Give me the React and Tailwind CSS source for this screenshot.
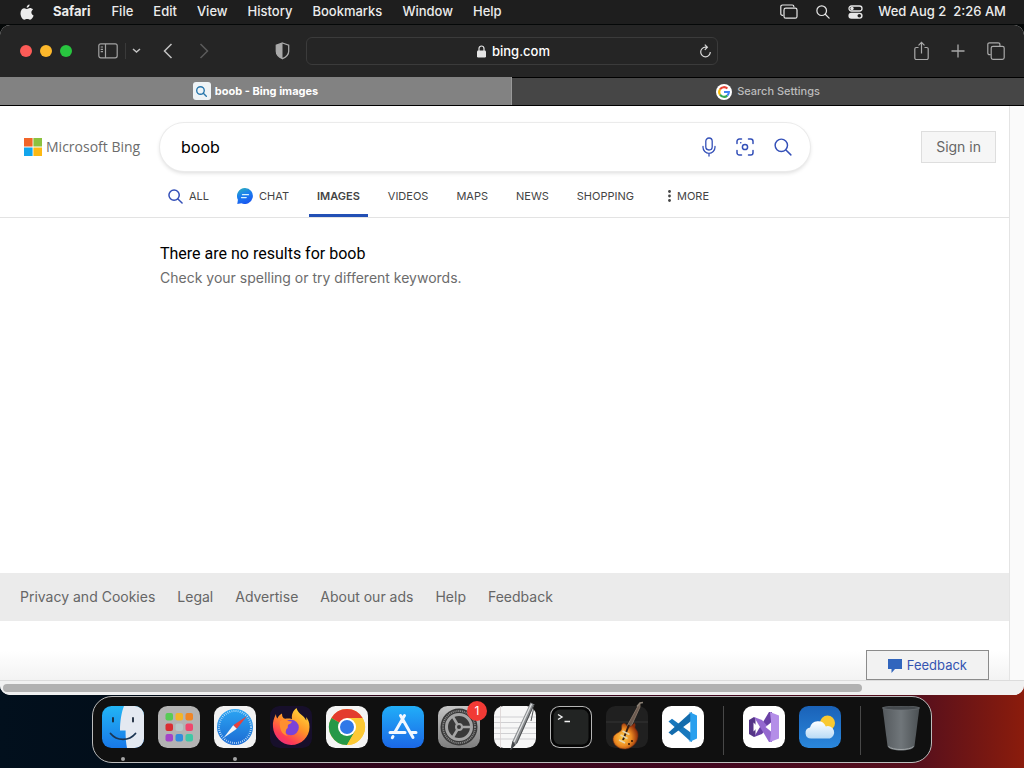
import React, { useState } from 'react'

const menus = ["File", "Edit", "View", "History", "Bookmarks", "Window", "Help"];
const footerLinks = ["Privacy and Cookies", "Legal", "Advertise", "About our ads", "Help", "Feedback"];

const AppleIcon = () => (
    <svg width="14" height="17" viewBox="0 0 14 17" fill="#ececec">
        <path d="M9.6 0.5c.1 1.7-1.3 3.2-2.9 3.2C6.500 2.100 8 .7 9.600.5z" />
        <path d="M7 5c.7 0 1.600-.9 3-.9 1 0 2.200.5 3 1.500-2.400 1.500-2 4.900.6 5.900-.6 1.700-2 4.300-3.500 4.300-1.100 0-1.500-.7-2.900-.7s-1.800.7-2.800.7C2.500 15.800.5 12.400.5 9.300.5 6 2.500 4.200 4.300 4.200 5.500 4.200 6.400 5 7 5z" />
    </svg>
)

const DisplaysIcon = () => (
    <svg width="18" height="16" viewBox="0 0 18 16" fill="none" stroke="#e6e6e6" strokeWidth="1.2">
        <path d="M3.200 11.400H2.500A1.700 1.700 0 0 1 .8 9.700V2.700A1.700 1.700 0 0 1 2.500 1h9.700a1.700 1.700 0 0 1 1.700 1.700v.6" />
        <rect x="4" y="4.200" width="13" height="10" rx="1.800" />
    </svg>
)

const SearchIcon = ({ size = 14, color = "#e6e6e6", width = 1.4 }) => (
    <svg width={size} height={size} viewBox="0 0 16 16" fill="none" stroke={color} strokeWidth={width} strokeLinecap="round">
        <circle cx="6.500" cy="6.500" r="5.500" />
        <path d="M10.600 10.600 15 15" />
    </svg>
)

const ControlIcon = () => (
    <svg width="15" height="14" viewBox="0 0 15 14" fill="none">
        <rect x="1" y="1" width="13" height="5" rx="2.500" stroke="#e6e6e6" strokeWidth="1.300" />
        <circle cx="4" cy="3.500" r="1.700" fill="#e6e6e6" />
        <rect x=".4" y="7.800" width="14.200" height="6" rx="3" fill="#e6e6e6" />
        <circle cx="11.300" cy="10.800" r="1.800" fill="#1e1e1e" />
    </svg>
)

const SidebarIcon = () => (
    <svg width="20" height="16" viewBox="0 0 20 16" fill="none" stroke="#a3a3a3" strokeWidth="1.200">
        <rect x=".8" y=".8" width="18.400" height="14" rx="2" />
        <path d="M7.500 1v14M2.700 4H5M2.700 6.300H5M2.700 8.600H5" />
    </svg>
)

const ShieldIcon = () => (
    <svg width="15" height="18" viewBox="0 0 15 18">
        <path d="M7.500 1 13.700 3.200v6c0 3.500-2.500 5.800-6.200 7.500C3.800 15 1.300 12.700 1.300 9.200v-6z" fill="none" stroke="#a9a9a9" strokeWidth="1.300" />
        <path d="M7.500 1v15.700C3.800 15 1.300 12.700 1.300 9.200v-6z" fill="#a9a9a9" />
    </svg>
)

const GoogleIcon = () => (
    <svg width="16" height="16" viewBox="0 0 16 16">
        <circle cx="8" cy="8" r="8" fill="#fff" />
        <g fill="none" strokeWidth="2.100">
            <path d="M4 5.300A4.900 4.900 0 0 1 11.400 4.500" stroke="#ea4335" />
            <path d="M4 5.300A4.900 4.900 0 0 0 4 10.700" stroke="#fbbc05" />
            <path d="M4 10.700a4.900 4.900 0 0 0 7.300.9" stroke="#34a853" />
            <path d="M8 8h4.900a4.900 4.900 0 0 1-1.600 3.600" stroke="#4285f4" />
        </g>
    </svg>
)

const ChatIcon = () => (
    <svg width="16" height="16" viewBox="0 0 16 16">
        <defs>
            <linearGradient id="chat" x1="0" y1="0" x2=".4" y2="1">
                <stop offset="0" stopColor="#2fb4b4" />
                <stop offset=".5" stopColor="#1b80ee" />
                <stop offset="1" stopColor="#1a5bf0" />
            </linearGradient>
        </defs>
        <path d="M8 0a8 8 0 1 1-3.600 15.200L.3 16l.6-4.200A8 8 0 0 1 8 0z" fill="url(#chat)" />
        <path d="M5.500 6.700h6M4.500 9.600h4.700" stroke="#d8f3ff" strokeWidth="1.300" strokeLinecap="round" />
    </svg>
)

const Tile = ({ children, fill = "#fff" }) => (
    <svg className="overflow-visible" width="42" height="42" viewBox="0 0 42 42" fill="none">
        <rect width="42" height="42" rx="9.500" fill={fill} />
        {children}
    </svg>
)

const Finder = () => (
    <Tile fill="url(#finder)">
        <defs>
            <linearGradient id="finder" x1="0" y1="0" x2="0" y2="1">
                <stop offset="0" stopColor="#22b5f5" />
                <stop offset="1" stopColor="#1878e8" />
            </linearGradient>
        </defs>
        <path d="M22 0h10.500A9.500 9.500 0 0 1 42 9.500v23a9.500 9.500 0 0 1-9.500 9.500H25c-1-5-1.500-10-1.400-17.500H18C18 15 19.500 6 22 0z" fill="#e4e9f1" />
        <path d="M11 12v3.500M31 12v3.500" stroke="#182638" strokeWidth="1.800" strokeLinecap="round" />
        <path d="M8.500 27.500c6.500 7.800 18.500 7.800 25 0" stroke="#1b3552" strokeWidth="1.800" strokeLinecap="round" />
    </Tile>
)

const Launchpad = () => {
    const colors = ["#57cb55", "#f3b52a", "#ef8526", "#d92d32", "#b8c7c8", "#ef466d", "#a344c8", "#318ddd", "#3fc7a5"];
    return (
        <Tile fill="#b3b3b3">
            {colors.map((c, i) => (
                <rect key={c} x={7.5 + (i % 3) * 10} y={7 + Math.floor(i / 3) * 10.5} width="7.500" height="7.500" rx="2" fill={c} />
            ))}
        </Tile>
    )
}

const SafariApp = () => (
    <Tile fill="#f2f2f2">
        <defs>
            <linearGradient id="safari" x1="0" y1="0" x2="0" y2="1">
                <stop offset="0" stopColor="#2ba5f3" />
                <stop offset="1" stopColor="#1c6bd3" />
            </linearGradient>
        </defs>
        <circle cx="21" cy="21" r="18" fill="url(#safari)" />
        <circle cx="21" cy="21" r="16" stroke="#d5ebfb" strokeWidth="2" strokeDasharray=".7 1.400" />
        <path d="M33 10 19.200 19.200l3.600 3.600z" fill="#e7413c" />
        <path d="M9.500 32 19.200 19.200l3.600 3.600z" fill="#f3f5f7" />
    </Tile>
)

const Firefox = () => (
    <Tile fill="#170f2b">
        <defs>
            <linearGradient id="fox" x1=".85" y1="0" x2=".2" y2="1">
                <stop offset="0" stopColor="#ffe03c" />
                <stop offset=".45" stopColor="#ff9327" />
                <stop offset=".8" stopColor="#ff3b55" />
                <stop offset="1" stopColor="#e62b87" />
            </linearGradient>
        </defs>
        <path d="M26.500 2c-4 3-5 7-4.500 11-4-1-6 0-8-.5-1.500-1-2-3-2-5C9 9 8 11 7.500 12.500 6.500 12 6 10 6 8c-2 4-3.600 8-3 13 .6 9.500 8.500 18 18.200 18C31.500 39 39.500 31 39.500 21c0-5-1.500-8-3.500-10 .3 1.500.5 2.500.2 3.500C34 9 28 8 26.500 2z" fill="url(#fox)" />
        <circle cx="21" cy="21.500" r="7.800" fill="#7b43d8" />
        <path d="M10 15c3-2 6-1.500 8 0l4 .5c-.5 2-3 2.500-4 3.500-.5 1.500.5 3-1.500 4-1 3-1.500 5 1.500 7-7-1-9-9-8-15z" fill="#ff8f30" />
    </Tile>
)

const Chrome = () => (
    <Tile fill="#f4f4f4">
        <circle cx="21" cy="21" r="18" fill="#fcc934" />
        <path d="M21 21 5.400 12A18 18 0 0 1 36.600 12H21z" fill="#e33b2e" />
        <path d="M21 21 5.400 12A18 18 0 0 0 21 39l7.800-13.500z" fill="#269847" />
        <path d="M21 12h15.600A18 18 0 0 1 21 39l7.800-13.500z" fill="#fcc934" />
        <circle cx="21" cy="21" r="9" fill="#fff" />
        <circle cx="21" cy="21" r="7" fill="#3078e8" />
    </Tile>
)

const AppStore = () => (
    <Tile fill="url(#store)">
        <defs>
            <linearGradient id="store" x1="0" y1="0" x2="0" y2="1">
                <stop offset="0" stopColor="#21aef8" />
                <stop offset="1" stopColor="#1b67e6" />
            </linearGradient>
        </defs>
        <g stroke="#f2f8ff" strokeWidth="3" strokeLinecap="round">
            <path d="M22.500 9.500 13 26M18.500 9.500 31 31.500M8 26.500h15M29.500 26.500H34M11 30.500l-.7 1.200" />
        </g>
    </Tile>
)

const Settings = () => (
    <Tile fill="url(#gear)">
        <defs>
            <linearGradient id="gear" x1="0" y1="0" x2="0" y2="1">
                <stop offset="0" stopColor="#c5c5c5" />
                <stop offset="1" stopColor="#7e7e7e" />
            </linearGradient>
        </defs>
        <circle cx="21" cy="21" r="18.500" fill="#393939" />
        <circle cx="21" cy="21" r="16" stroke="#858585" strokeWidth="1.800" strokeDasharray="1.100 .8" />
        <circle cx="21" cy="21" r="12.500" stroke="#a5a5a5" strokeWidth="3" />
        <circle cx="21" cy="21" r="3" stroke="#a5a5a5" strokeWidth="2" />
        <path d="M24 21h9.500M19.500 18.500l-4.800-8M19.500 23.500l-4.800 8" stroke="#a5a5a5" strokeWidth="2.600" />
    </Tile>
)

const TextEdit = () => (
    <Tile fill="#f7f7f7">
        <path d="M0 11h42M0 16.500h42M0 22h42M0 27.500h42M0 33h42" stroke="#c5c5c9" strokeWidth=".8" />
        <path d="M6.500 0v42" stroke="#d9d2d2" strokeWidth=".8" />
        <path d="M36.500-3.500 40.500-1.500 23.500 37 16.500 44l2-9z" fill="#8a8d90" />
        <path d="M37.500-2 20 36" stroke="#e0e1e2" strokeWidth="1.300" />
        <path d="M40-1.500 22.500 37.500M39.500 3 37 15" stroke="#4d4f51" strokeWidth="1" />
        <path d="M18.500 35 16.500 44l5-5z" fill="#45474a" />
    </Tile>
)

const Terminal = () => (
    <Tile fill="#b5b5b5">
        <rect x="1" y="1" width="40" height="40" rx="8.500" fill="#050505" />
        <rect x="3.500" y="3.500" width="35" height="35" rx="6.500" fill="#222423" />
        <path d="m8 8.500 4 2.500-4 2.500M14.500 15.500H20" stroke="#f3f3f3" strokeWidth="1.400" />
    </Tile>
)

const GarageBand = () => (
    <Tile fill="#202020">
        <defs>
            <radialGradient id="guitar" cx=".4" cy=".55" r=".6">
                <stop offset="0" stopColor="#ffd04a" />
                <stop offset=".55" stopColor="#ee8c22" />
                <stop offset="1" stopColor="#8d2c0b" />
            </radialGradient>
        </defs>
        <path d="M0 16h42" stroke="#343434" />
        <path d="M34-2.500 31.500 1 20 22l3.500 2L34 1z" fill="#6b5a50" stroke="#9b8776" strokeWidth=".7" />
        <path d="M31 .5 34-3l3-.5" stroke="#8b8176" strokeWidth="1.500" />
        <path d="M16 18.500c2-2.500 4-.5 5 1.500s4 1 7-2.500c1-1 1.500 1.500 1 3-.6 2.500 2.500 3 3 7.500.8 7.500-5.500 14.500-12.500 15C12 43.500 6.500 38 7 32.500c.6-5 6-5.500 8-8 1.200-2 .1-4.500 1-6z" fill="url(#guitar)" stroke="#6c2b12" strokeWidth=".6" />
        <path d="M23 19 17 34" stroke="#321d13" strokeWidth="2" />
        <path d="m16.500 25 7 3.500M14.500 29l7 3.500M13 34l6 3" stroke="#e7d6b0" strokeWidth="1.500" />
        <circle cx="26" cy="35" r="1" fill="#2c1507" />
        <circle cx="23" cy="38" r="1" fill="#2c1507" />
    </Tile>
)

const VSCode = () => (
    <Tile>
        <path d="M6.500 15.500 10 12.800 30 27.500V36L27 34z" fill="#1878bd" />
        <path d="M6.500 26.500 10 29.200l20-14.700V6L27 8z" fill="#146cad" />
        <path d="M28 6.300 35 9.500v23l-7 3.300-1.500-1.300h1.800v-27h-1.800z" fill="#2aa0ee" />
    </Tile>
)

const VisualStudio = () => (
    <Tile>
        <path d="M6 14 11 11l1.500 1v18L11 31l-5-3z" fill="#553587" />
        <path d="M10.500 16.500v9L15 21z" fill="#fff" />
        <path d="M11 31 19 28 29 17V6h-3z" fill="#6940a5" />
        <path d="M11 11 19 14 29 25v11h-3z" fill="#9468cf" />
        <path d="m27 6 9 3.500v23L27 36l1-9V15z" fill="#b48ee8" />
        <path d="M28 16.500v9L22.500 21z" fill="#fff" />
    </Tile>
)

const Weather = () => (
    <Tile fill="url(#sky)">
        <defs>
            <linearGradient id="sky" x1="0" y1="0" x2="0" y2="1">
                <stop offset="0" stopColor="#1a62b8" />
                <stop offset="1" stopColor="#2a87dc" />
            </linearGradient>
            <linearGradient id="cloud" x1="0" y1="0" x2="0" y2="1">
                <stop offset="0" stopColor="#fff" />
                <stop offset="1" stopColor="#b9dbf6" />
            </linearGradient>
        </defs>
        <circle cx="28.500" cy="17" r="7.500" fill="#f9c931" />
        <path d="M12 32.500a5.500 5.500 0 0 1-1-10.900 8.300 8.300 0 0 1 15.800-1.200 6.200 6.200 0 1 1 4 12.100z" fill="url(#cloud)" />
    </Tile>
)

const Trash = () => (
    <svg width="42" height="48" viewBox="0 0 42 48">
        <defs>
            <linearGradient id="bin" x1="0" y1="0" x2="1" y2="0">
                <stop offset="0" stopColor="#54595d" />
                <stop offset=".5" stopColor="#70767a" />
                <stop offset="1" stopColor="#4b5053" />
            </linearGradient>
        </defs>
        <path d="M2.500 1 7.500 40c1 6 26 6 27 0l5-39z" fill="url(#bin)" />
        <ellipse cx="21" cy="2" rx="18.500" ry="2" fill="#454a4e" stroke="#6f7478" strokeWidth=".6" />
        <path d="M8.500 40.500c4 4 21 4 25 0" stroke="#a3a8aa" fill="none" />
    </svg>
)

const dockApps = [
    { name: "Finder", Icon: Finder, running: true },
    { name: "Launchpad", Icon: Launchpad },
    { name: "Safari", Icon: SafariApp, running: true },
    { name: "Firefox", Icon: Firefox },
    { name: "Chrome", Icon: Chrome },
    { name: "App Store", Icon: AppStore },
    { name: "Settings", Icon: Settings, badge: 1 },
    { name: "TextEdit", Icon: TextEdit },
    { name: "Terminal", Icon: Terminal },
    { name: "GarageBand", Icon: GarageBand },
    { name: "VS Code", Icon: VSCode },
    { name: "divider1" },
    { name: "Visual Studio", Icon: VisualStudio },
    { name: "Weather", Icon: Weather },
    { name: "divider2" },
    { name: "Trash", Icon: Trash },
];

function MenuBar() {
    return (
        <header className="flex h-6 items-center bg-[#1e1e1e] pl-5 pr-[18px] text-[13px] font-medium text-[#ececec]">
            <button aria-label="Apple menu"><AppleIcon /></button>
            <nav className="ml-[19px] flex gap-5">
                <button className="mr-px font-bold">Safari</button>
                {menus.map((m) => <button key={m}>{m}</button>)}
            </nav>
            <div className="ml-auto flex items-center">
                <button aria-label="Displays"><DisplaysIcon /></button>
                <button aria-label="Spotlight" className="ml-[18px]"><SearchIcon /></button>
                <button aria-label="Control Center" className="ml-[18px]"><ControlIcon /></button>
                <span className="ml-[15px] whitespace-pre">Wed Aug 2  2:26 AM</span>
            </div>
        </header>
    )
}

function Toolbar() {
    return (
        <div className="grid h-[52px] grid-cols-[1fr_412px_1fr] items-center bg-[#252525]">
            <div className="flex items-center pl-5 pr-4">
                <div className="flex gap-2">
                    <button aria-label="Close" className="size-3 rounded-full bg-[#fc5b57]" />
                    <button aria-label="Minimize" className="size-3 rounded-full bg-[#fdb82b]" />
                    <button aria-label="Zoom" className="size-3 rounded-full bg-[#28c53f]" />
                </div>
                <button aria-label="Sidebar" className="ml-[26px]"><SidebarIcon /></button>
                <span className="ml-[7px] h-4 w-px bg-[#3a3a3a]" />
                <button aria-label="Tab groups" className="ml-1.5">
                    <svg width="9" height="6" viewBox="0 0 9 6" fill="none" stroke="#c2c2c2" strokeWidth="1.500"><path d="m1 1 3.500 3L8 1" /></svg>
                </button>
                <button aria-label="Back" className="ml-[22px]">
                    <svg width="10" height="16" viewBox="0 0 10 16" fill="none" stroke="#c2c2c2" strokeWidth="1.500"><path d="M8.500 1 1.500 8l7 7" /></svg>
                </button>
                <button aria-label="Forward" className="ml-[26px]">
                    <svg width="10" height="16" viewBox="0 0 10 16" fill="none" stroke="#5b5b5b" strokeWidth="1.500"><path d="m1.500 1 7 7-7 7" /></svg>
                </button>
                <button aria-label="Privacy report" className="ml-auto"><ShieldIcon /></button>
            </div>
            <div className="flex h-7 items-center rounded-md border border-[#3b3b3b] pr-1.5">
                <div className="flex flex-1 items-center justify-center gap-1.5 pl-5 pt-px text-[13px] font-medium text-white">
                    <svg width="9" height="13" viewBox="0 0 9 13">
                        <rect y="5.500" width="9" height="7" rx="1.200" fill="#e5e5e5" />
                        <path d="M2 6V3.500a2.500 2.500 0 0 1 5 0V6" fill="none" stroke="#e5e5e5" strokeWidth="1.200" />
                    </svg>
                    <span>bing.com</span>
                </div>
                <button aria-label="Reload">
                    <svg width="11" height="14" viewBox="0 0 11 14" fill="none" stroke="#dadada" strokeWidth="1.200"><path d="M7 3.200H5.500a4.800 4.800 0 1 0 4.800 4.800M4.800.6l2.600 2.600-2.600 2.600" /></svg>
                </button>
            </div>
            <div className="flex items-center justify-end gap-[22px] pr-[19px] text-[#a9a9a9]">
                <button aria-label="Share">
                    <svg width="15" height="20" viewBox="0 0 15 20" fill="none" stroke="currentColor" strokeWidth="1.200"><path d="M4.500 6.500H2.300A1.500 1.500 0 0 0 .8 8v9a1.500 1.500 0 0 0 1.500 1.500h10.400a1.500 1.500 0 0 0 1.500-1.500V8a1.500 1.500 0 0 0-1.500-1.500h-2.200M7.500 12.500V1.300M4.500 4.300l3-3 3 3" /></svg>
                </button>
                <button aria-label="New tab">
                    <svg width="14" height="14" viewBox="0 0 14 14" stroke="currentColor" strokeWidth="1.300"><path d="M7 .5v13M.5 7h13" /></svg>
                </button>
                <button aria-label="Tab overview">
                    <svg width="18" height="18" viewBox="0 0 18 18" fill="none" stroke="currentColor" strokeWidth="1.200"><path d="M3.700 12.700H2.500a1.700 1.700 0 0 1-1.700-1.700V2.500A1.700 1.700 0 0 1 2.500.8h8.700a1.700 1.700 0 0 1 1.700 1.700v1.400" /><rect x="4.200" y="4.300" width="13" height="13" rx="1.800" /></svg>
                </button>
            </div>
        </div>
    )
}

function BingHeader() {
    const [query, setQuery] = useState("boob");

    return (
        <header className="border-b border-[#e3e3e3] pt-[17px]">
            <div className="flex items-center pl-6 pr-[13px]">
                <a href="#" className="flex w-[136px] shrink-0 items-center gap-1 whitespace-nowrap font-['Open_Sans',sans-serif] text-sm font-medium text-[#6c6c6c]">
                    <svg width="18" height="18" viewBox="0 0 18 18">
                        <path fill="#f16529" d="M0 0h8.600v8.600H0z" />
                        <path fill="#8bc13f" d="M9.400 0H18v8.600H9.400z" />
                        <path fill="#12a5ec" d="M0 9.400h8.600V18H0z" />
                        <path fill="#fdb913" d="M9.400 9.400H18V18H9.400z" />
                    </svg>
                    Microsoft Bing
                </a>
                <form className="flex h-12 max-w-[650px] flex-1 items-center rounded-full bg-white pl-[21px] pr-[18px] shadow-[0_0_0_1px_#ebebeb,0_2px_4px_#00000026]" onSubmit={(e) => e.preventDefault()}>
                    <input aria-label="Search" className="min-w-0 flex-1 text-base text-black outline-none" value={query} onChange={(e) => setQuery(e.target.value)} />
                    <button type="button" aria-label="Search using voice">
                        <svg width="14" height="20" viewBox="0 0 14 20" fill="none" stroke="#3450b8" strokeWidth="1.300" strokeLinecap="round"><rect x="3.800" y="1" width="6.400" height="12" rx="3.200" /><path d="M1 9.500v.8a6 6 0 0 0 12 0v-.8M7 16.300V19" /></svg>
                    </button>
                    <button type="button" aria-label="Search using an image" className="ml-5">
                        <svg width="18" height="18" viewBox="0 0 18 18" fill="none" stroke="#3450b8" strokeWidth="1.500" strokeLinecap="round"><path d="M1 5.500V3.300A2.300 2.300 0 0 1 3.300 1h2.200M12.500 1h2.200A2.300 2.300 0 0 1 17 3.300v2.200M17 12.500v2.200a2.300 2.300 0 0 1-2.300 2.300h-2.200M5.500 17H3.300A2.300 2.300 0 0 1 1 14.700v-2.200" /><circle cx="9" cy="9" r="2.600" /><path d="M4.700 4.700h.1" /></svg>
                    </button>
                    <button aria-label="Search" className="ml-5"><SearchIcon size={18} color="#3450b8" width={1.3} /></button>
                </form>
                <button className="ml-auto h-8 border border-[#dedede] bg-[#f6f6f6] px-3.5 text-sm text-[#666]">Sign in</button>
            </div>
            <nav className="ml-40 flex h-[46px] gap-3 text-[11px] leading-4 text-[#444]">
                <a href="#" className="flex items-center gap-1.5 px-2 pt-1"><SearchIcon size={15} color="#3450b8" width={1.6} />ALL</a>
                <a href="#" className="flex items-center gap-1.5 px-2 pt-1"><ChatIcon />CHAT</a>
                <a href="#" className="flex items-center border-b-3 border-[#2350b5] px-2 pt-1.5 font-semibold">IMAGES</a>
                {["VIDEOS", "MAPS", "NEWS", "SHOPPING"].map((t) => (
                    <a key={t} href="#" className="flex items-center px-2 pt-1">{t}</a>
                ))}
                <button className="ml-1.5 flex items-center gap-1.5 px-2 pt-1">
                    <svg width="3" height="12" viewBox="0 0 3 12" fill="#444"><circle cx="1.500" cy="1.500" r="1.400" /><circle cx="1.500" cy="6" r="1.400" /><circle cx="1.500" cy="10.500" r="1.400" /></svg>
                    MORE
                </button>
            </nav>
        </header>
    )
}

function Dock() {
    return (
        <nav className="mx-auto mt-px mb-[5px] flex h-[67px] gap-[14px] rounded-[20px] border border-[#bdbdbd] bg-[#101010] px-[9px] pt-[9px]">
            {dockApps.map(({ name, Icon, running, badge }) =>
                Icon ? (
                    <button key={name} aria-label={name} className="relative flex w-[42px] flex-col items-center">
                        <Icon />
                        {badge && <span className="absolute -right-[7px] -top-[5px] flex size-5 items-center justify-center rounded-full bg-[#f13a35] text-xs text-white">{badge}</span>}
                        {running && <span className="mt-[9px] size-1 rounded-full bg-[#a5a5a5]" />}
                    </button>
                ) : (
                    <span key={name} className="mx-[5px] h-[49px] w-px bg-[#484848]" />
                )
            )}
        </nav>
    )
}

function App() {
    return (
        <div className="flex min-h-screen flex-col bg-[linear-gradient(90deg,#02101d_0%,#020d19_15%,#30051b_35%,#43071f_70%,#58101c_90%,#8b1c0c_100%)] font-[Inter,'Liberation_Sans',sans-serif]">
            <MenuBar />
            {/* browser window */}
            <div className="bg-[linear-gradient(#050808_50%,transparent_50%)] flex flex-1 flex-col pt-px">
                <div className="flex flex-1 flex-col overflow-hidden rounded-[10px] bg-white">
                    <Toolbar />
                    <div className="grid grid-cols-2 border-b border-black text-[11px]">
                        <button className="flex h-7 items-center justify-center gap-1 border-r border-[#999] bg-[#828282] font-bold text-white">
                            <span className="flex size-[18px] items-center justify-center rounded-[3px] bg-[#eef3f6]"><SearchIcon size={11} color="#2877ac" width={2} /></span>
                            boob - Bing images
                        </button>
                        <button className="flex h-7 items-center justify-center gap-[5px] border-t border-black bg-[#464646] font-medium text-[#bcbcbc]">
                            <GoogleIcon />
                            Search Settings
                        </button>
                    </div>
                    <div className="flex flex-1">
                        <div className="flex flex-1 flex-col">
                            <BingHeader />
                            <main className="flex-1 pl-40 pt-6">
                                <h1 className="font-[Roboto,sans-serif] text-base leading-6 text-black">There are no results for boob</h1>
                                <p className="text-sm leading-6 text-[#6c6c6c]">Check your spelling or try different keywords.</p>
                            </main>
                            <footer className="flex h-12 items-center gap-[22px] bg-[#ebebeb] pl-5 text-sm text-[#666]">
                                {footerLinks.map((l) => <a key={l} href="#">{l}</a>)}
                            </footer>
                            <div className="flex h-[59px] items-end justify-end bg-linear-to-b from-white from-50% to-[#f3f3f3] pr-5">
                                <button className="flex h-[30px] items-center gap-[5px] border border-[#8b8b8b] bg-[#f2f2f2] px-[21px] pt-px text-[13px] text-[#3454b1]">
                                    <svg width="14" height="14" viewBox="0 0 14 14" fill="#3165bd"><path d="M0 0h14v10H7l-3.500 4v-4H0z" /></svg>
                                    Feedback
                                </button>
                            </div>
                        </div>
                        <div className="w-[15px] border-l border-[#e4e4e4] bg-[#fafafa]" />
                    </div>
                    <div className="h-[15px] border-t border-[#dcdcdc] bg-[#f1f1f1] px-[3px] pt-[3px]">
                        <div className="h-2 w-[84.4%] rounded-full bg-[#b1b1b1]" />
                    </div>
                </div>
            </div>
            <Dock />
        </div>
    )
}

export default App
